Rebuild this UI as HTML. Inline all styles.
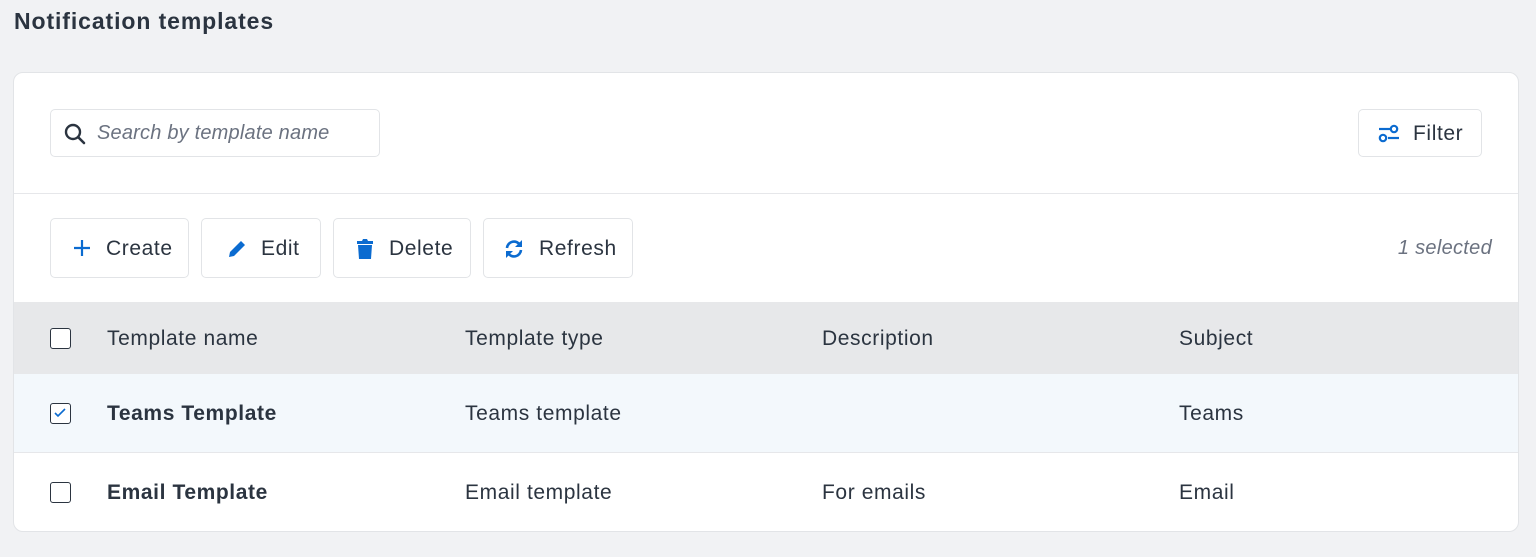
<!DOCTYPE html>
<html><head><style>
*{box-sizing:border-box;margin:0;padding:0}
body{width:1536px;height:557px;background:#f1f2f4;font-family:"Liberation Sans",sans-serif;color:#2b3440;position:relative;overflow:hidden;letter-spacing:0.6px}
.title{position:absolute;left:14px;top:8px;font-size:23px;font-weight:bold;color:#2b3440;letter-spacing:0.9px}
.card{position:absolute;left:13px;top:72px;width:1506px;height:460px;background:#fff;border:1px solid #e2e4e7;border-radius:10px;overflow:hidden}
.search{position:absolute;left:36px;top:36px;width:330px;height:48px;border:1px solid #e2e4e7;border-radius:5px}
.search span{position:absolute;left:46px;top:12px;font-size:20px;font-style:italic;color:#6b7280;letter-spacing:0.2px}
.filter{position:absolute;left:1344px;top:36px;width:124px;height:48px;border:1px solid #e2e4e7;border-radius:5px}
.filter span{position:absolute;left:54px;top:12px;font-size:21px}
.sep{position:absolute;left:0;top:120px;width:100%;height:1px;background:#e6e7ea}
.btn{position:absolute;top:145px;height:60px;border:1px solid #e2e4e7;border-radius:5px;font-size:21px}
.btn span{position:absolute;top:18px}
.btn svg{position:absolute;top:19px}
.sel{position:absolute;right:26px;top:164px;font-size:20px;font-style:italic;color:#6b7280;letter-spacing:0.3px}
.thead{position:absolute;left:0;top:229px;width:100%;height:72px;background:#e7e8ea}
.row{position:absolute;left:0;width:100%;font-size:21px}
.cell{position:absolute;top:0}
.cb{position:absolute;left:36px;width:21px;height:21px;border:1.5px solid #2b3440;border-radius:3px;background:#fff}
</style></head><body>
<div class="title">Notification templates</div>
<div class="card">
 <div class="search">
  <svg style="position:absolute;left:13px;top:13px" width="22" height="22" viewBox="0 0 22 22"><circle cx="9" cy="9" r="7" fill="none" stroke="#2b3440" stroke-width="2.4"/><line x1="14" y1="14" x2="20" y2="20" stroke="#2b3440" stroke-width="2.6" stroke-linecap="round"/></svg>
  <span>Search by template name</span></div>
 <div class="filter">
  <svg style="position:absolute;left:19px;top:14px" width="22" height="20" viewBox="0 0 22 20"><line x1="1" y1="5" x2="12" y2="5" stroke="#0b6bd0" stroke-width="2.2"/><circle cx="16" cy="5" r="3.2" fill="none" stroke="#0b6bd0" stroke-width="2.2"/><line x1="10" y1="14" x2="21" y2="14" stroke="#0b6bd0" stroke-width="2.2"/><circle cx="5" cy="14" r="3.2" fill="none" stroke="#0b6bd0" stroke-width="2.2"/></svg>
  <span>Filter</span></div>
 <div class="sep"></div>
 <div class="btn" style="left:36px;width:139px"><svg style="left:21px" width="20" height="20" viewBox="0 0 20 20"><path d="M10 2v16M2 10h16" stroke="#0b6bd0" stroke-width="2.2"/></svg><span style="left:55px">Create</span></div>
 <div class="btn" style="left:187px;width:120px"><svg style="left:24px" width="22" height="22" viewBox="0 0 22 22"><path d="M3 19l1-5L15 3l4 4L8 18z" fill="#0b6bd0"/></svg><span style="left:59px">Edit</span></div>
 <div class="btn" style="left:319px;width:138px"><svg style="left:21px" width="20" height="22" viewBox="0 0 20 22"><path d="M2 3h5l1-2h4l1 2h5v3H2z M3 7h14l-1 14H4z" fill="#0b6bd0"/></svg><span style="left:55px">Delete</span></div>
 <div class="btn" style="left:469px;width:150px"><svg style="left:19px" width="22" height="22" viewBox="0 0 22 22"><path d="M4 10a7 7 0 0 1 13-3M18 12a7 7 0 0 1-13 3" fill="none" stroke="#0b6bd0" stroke-width="2.6"/><path d="M19 2v7h-7z M3 20v-7h7z" fill="#0b6bd0"/></svg><span style="left:55px">Refresh</span></div>
 <div class="sel">1 selected</div>
 <div class="thead">
  <div class="cb" style="top:26px"></div>
  <div class="row" style="top:25px;color:#2b3440">
   <span class="cell" style="left:93px">Template name</span><span class="cell" style="left:451px">Template type</span><span class="cell" style="left:808px">Description</span><span class="cell" style="left:1165px">Subject</span></div>
 </div>
 <div style="position:absolute;left:0;top:301px;width:100%;height:79px;background:#f3f8fc;border-bottom:1px solid #e6e7ea">
  <div class="cb" style="top:29px"><svg width="18" height="18" viewBox="0 0 18 18" style="position:absolute;left:0;top:0"><path d="M4 9l3 3 7-7" fill="none" stroke="#0b6bd0" stroke-width="1.6"/></svg></div>
  <div class="row" style="top:28px"><b class="cell" style="left:93px">Teams Template</b><span class="cell" style="left:451px">Teams template</span><span class="cell" style="left:1165px">Teams</span></div>
 </div>
 <div style="position:absolute;left:0;top:381px;width:100%;height:79px">
  <div class="cb" style="top:28px"></div>
  <div class="row" style="top:27px"><b class="cell" style="left:93px">Email Template</b><span class="cell" style="left:451px">Email template</span><span class="cell" style="left:808px">For emails</span><span class="cell" style="left:1165px">Email</span></div>
 </div>
</div>
</body></html>
